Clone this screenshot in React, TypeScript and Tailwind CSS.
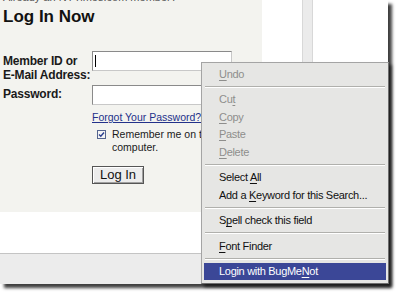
import React from 'react';

const menuFont = { fontFamily: '"Liberation Sans", Arial, sans-serif' };

type Item = { label: React.ReactNode; disabled?: boolean; active?: boolean };

// access-key letter gets underlined, like a classic Windows menu
const U = ({ children }: { children: React.ReactNode }) => <span className="underline underline-offset-2">{children}</span>;

const groups: Item[][] = [
  [{ label: <><U>U</U>ndo</>, disabled: true }],
  [
    { label: <>Cu<U>t</U></>, disabled: true },
    { label: <><U>C</U>opy</>, disabled: true },
    { label: <><U>P</U>aste</>, disabled: true },
    { label: <><U>D</U>elete</>, disabled: true },
  ],
  [
    { label: <>Select <U>A</U>ll</> },
    { label: <>Add a <U>K</U>eyword for this Search...</> },
  ],
  [{ label: <>S<U>p</U>ell check this field</> }],
  [{ label: <><U>F</U>ont Finder</> }],
  [{ label: <>Login with BugMe<U>N</U>ot</>, active: true }],
];

const ContextMenu: React.FC = () => (
  <div
    className="absolute left-[201px] top-[62px] w-[188px] h-[222px] bg-[#e6e6e4] border border-[#a4a4a4] border-r-[#6e6e6e] border-b-[#6e6e6e] px-[2px] py-[2px] shadow-[3px_3px_3px_rgba(0,0,0,0.55)] text-[11px] tracking-[-0.3px]"
    style={menuFont}
  >
    {groups.map((group, gi) => (
      <div key={gi}>
        {gi > 0 && (
          <div className="h-[8px] flex flex-col justify-center px-[1px]">
            <div className="h-px bg-[#b0b0ac]" />
            <div className="h-px bg-white" />
          </div>
        )}
        {group.map((item, ii) => (
          <div
            key={ii}
            className={
              'h-[17.5px] flex items-center pl-[15px] ' +
              (item.active
                ? 'bg-[#3b4797] text-white'
                : item.disabled
                ? 'text-[#8e8e8c]'
                : 'text-[#111]')
            }
          >
            <span className="whitespace-pre">{item.label}</span>
          </div>
        ))}
      </div>
    ))}
  </div>
);

const App: React.FC = () => {
  return (
    <div className="w-[400px] h-[294px] bg-white relative overflow-hidden" style={{ fontFamily: '"Liberation Sans", Arial, sans-serif' }}>
      {/* captured browser window */}
      <div className="w-[388px] h-[284px] flex flex-col shadow-[4px_4px_3px_rgba(0,0,0,0.75)] bg-white">
        <div className="h-[212px] flex">
          {/* login panel */}
          <div className="w-[262px] bg-[#f3f3ef] relative pl-[3px]">
            <p className="text-[11px] text-[#555] leading-none -mt-[8px] whitespace-nowrap">Already an NYTimes.com member?</p>
            <h1 className="text-[17px] font-bold text-[#111] leading-none mt-[5px]">Log In Now</h1>

            <div className="mt-[26px] flex">
              <div className="w-[94px] text-[12px] font-bold text-[#1a1a1a] leading-[14px] pt-[3px] whitespace-nowrap tracking-[-0.2px]">
                <div>Member ID or</div>
                <div>E-Mail Address:</div>
                <div className="mt-[5px]">Password:</div>
              </div>
              <div className="flex flex-col">
                <div className="w-[140px] h-[20px] bg-white border border-[#8a8a8a] border-r-[#c8c8c8] border-b-[#c8c8c8] flex items-center pl-[2px]">
                  <div className="w-px h-[12px] bg-black" />
                </div>
                <div className="w-[140px] h-[20px] bg-white border border-[#8a8a8a] border-r-[#c8c8c8] border-b-[#c8c8c8] mt-[14px]" />
                <a className="mt-[7px] text-[10.5px] text-[#23318a] underline leading-none whitespace-nowrap">Forgot Your Password?</a>
                <div className="flex mt-[5px] ml-[5px]">
                  <div className="w-[9px] h-[9px] mt-[2px] border border-[#55658f] bg-[#f4f4f4] flex items-center justify-center shrink-0">
                    <svg width="7" height="7" viewBox="0 0 7 7">
                      <path d="M1 3.5 L2.8 5.3 L6 1.5" stroke="#2b3f8f" strokeWidth="1.4" fill="none" />
                    </svg>
                  </div>
                  <p className="ml-[6px] text-[10.5px] text-[#1a1a1a] leading-[13px] w-[150px]">Remember me on this computer.</p>
                </div>
                <button className="mt-[12px] w-[52px] h-[18px] bg-[#ececec] border border-[#555] shadow-[inset_1px_1px_0_#fff,inset_-1px_-1px_0_#a0a0a0] text-[13px] text-[#111] leading-none">
                  Log In
                </button>
              </div>
            </div>
          </div>
          <div className="w-[40px] bg-white" />
          <div className="w-[11px] bg-[#ebebeb] border-l border-r border-[#d8d8d8]" />
          <div className="flex-1 bg-white" />
        </div>
        <div className="h-[41px] bg-white" />
        <div className="flex-1 bg-[#ececec] border-t border-[#c4c4c4]" />
      </div>

      <ContextMenu />
    </div>
  );
};

export default App;
